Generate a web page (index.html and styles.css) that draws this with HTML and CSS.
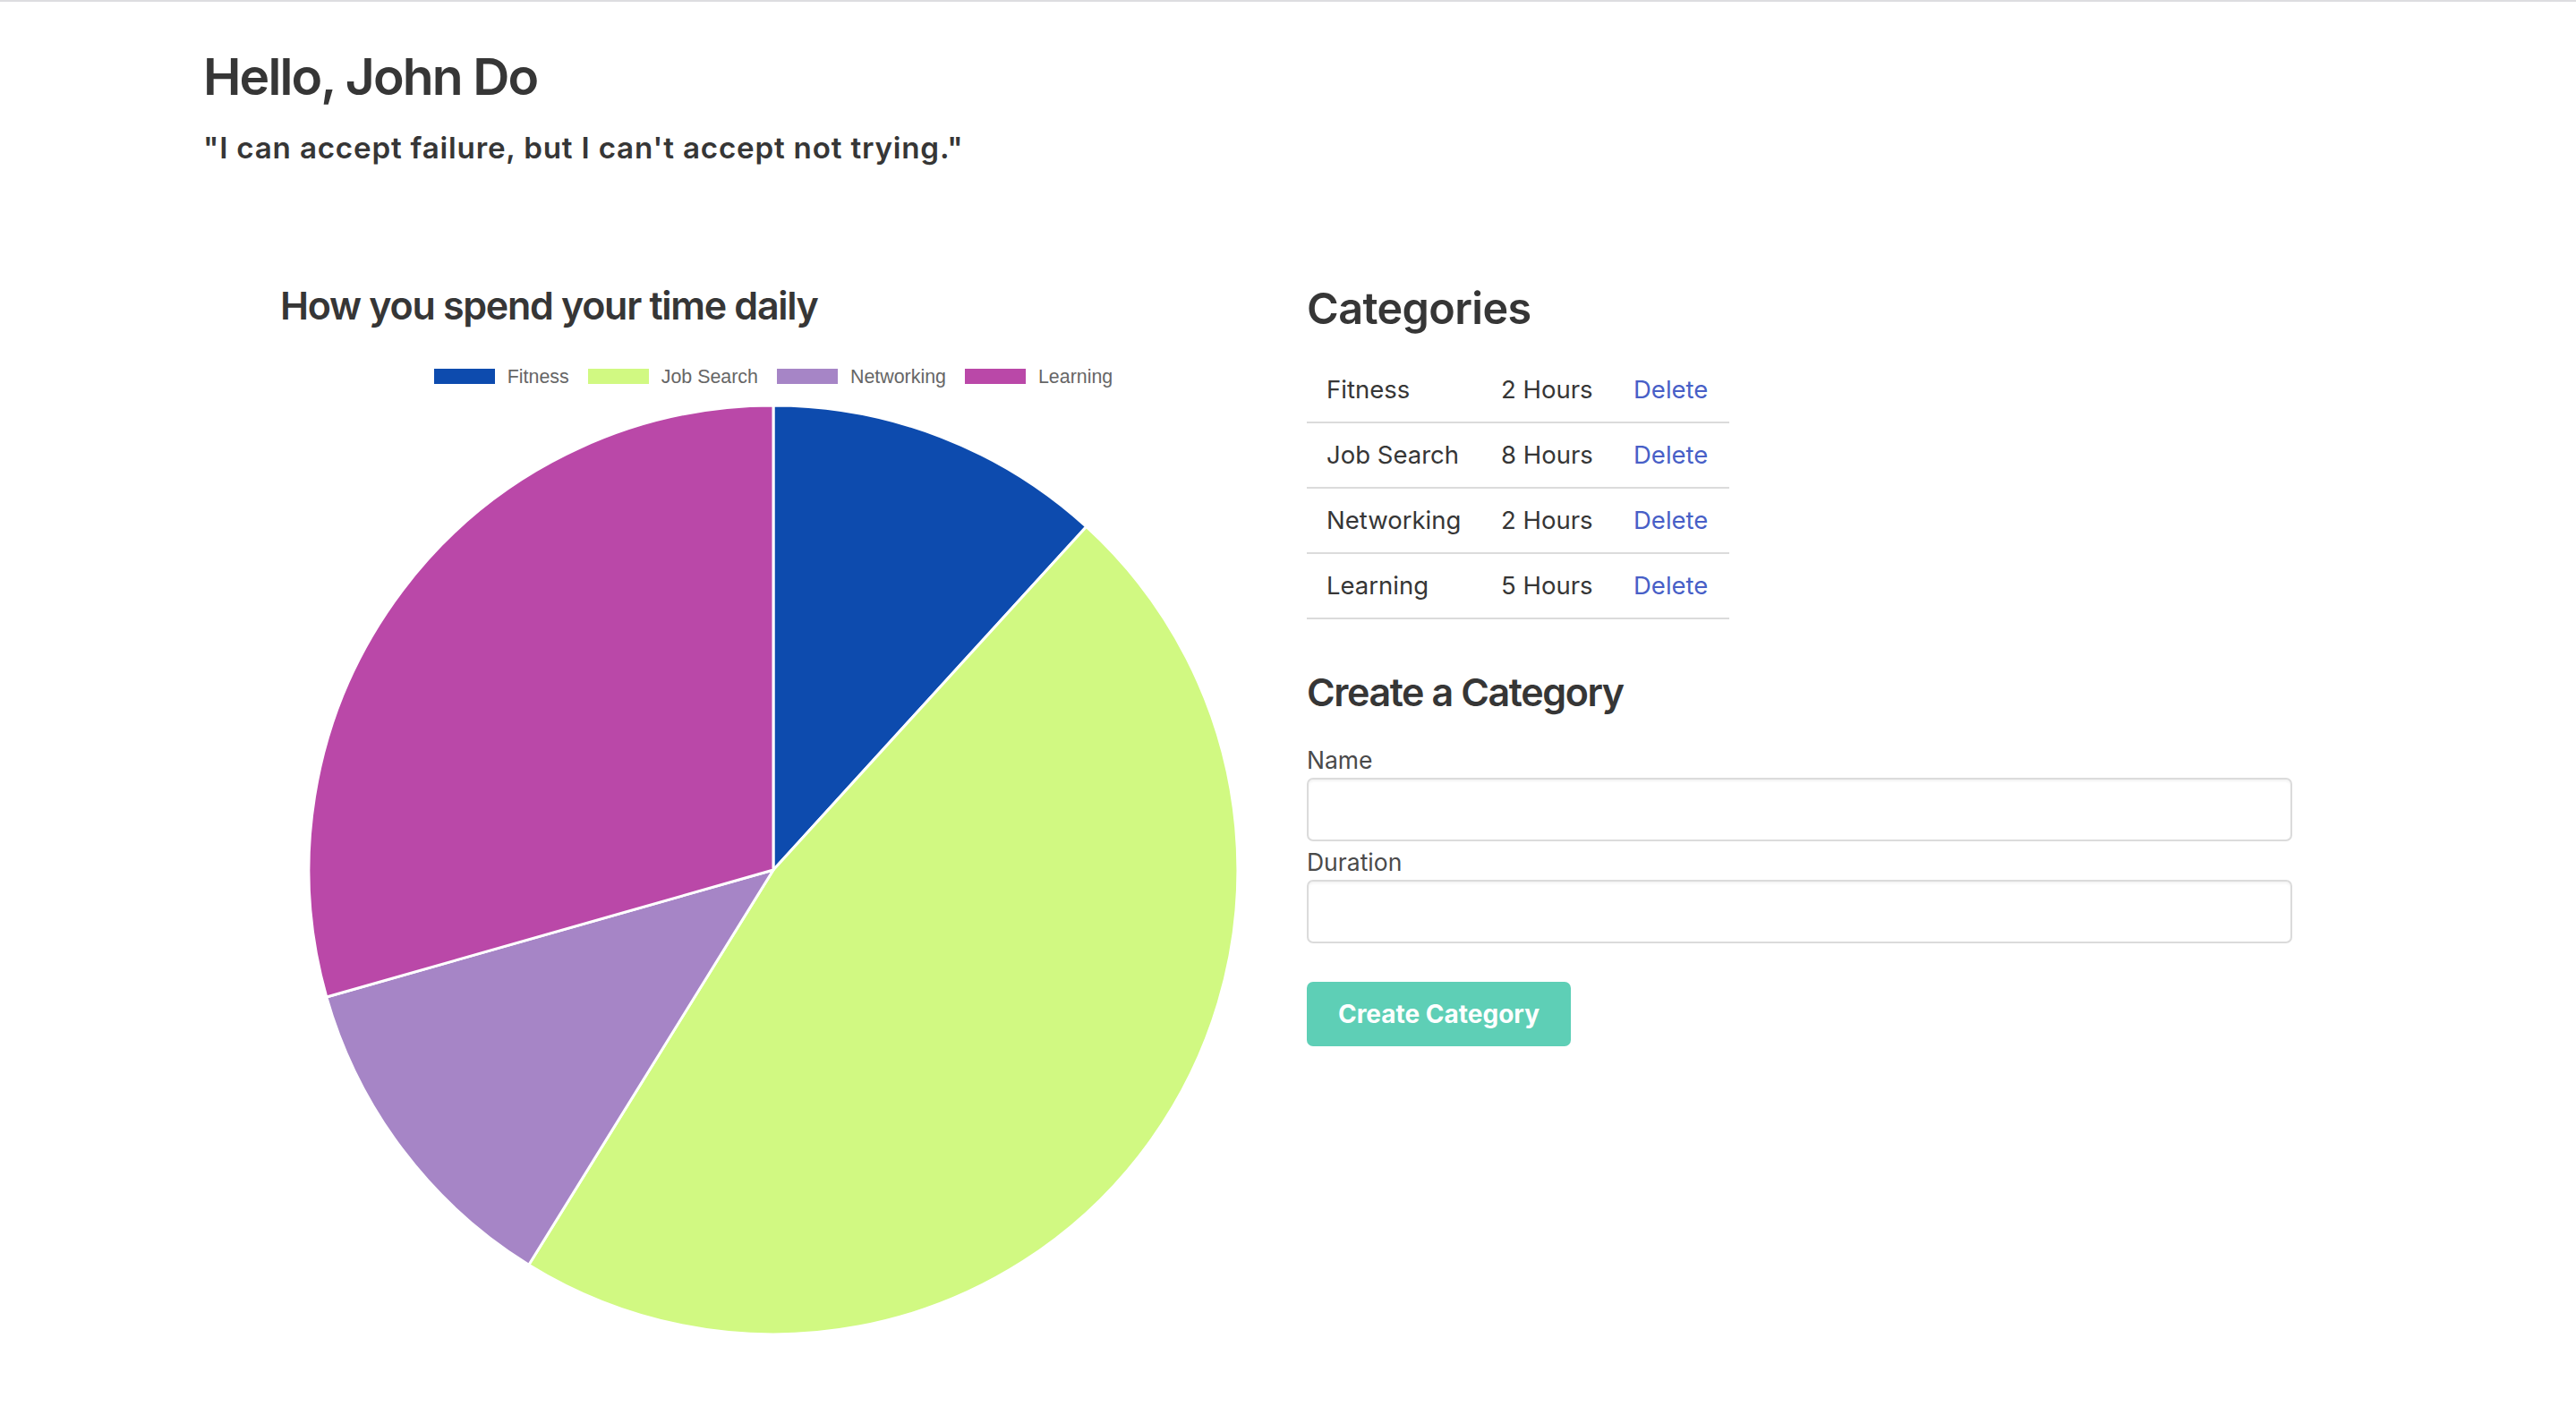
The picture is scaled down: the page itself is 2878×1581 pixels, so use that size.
FILE: index.html
```html
<!DOCTYPE html>
<html lang="en">
<head>
<meta charset="utf-8">
<title>Dashboard</title>
<link rel="stylesheet" href="styles.css">
</head>
<body>
<div class="topline"></div>
<main class="page">
  <header class="hero">
    <h1 class="hello">Hello, John Do</h1>
    <p class="quote">"I can accept failure, but I can't accept not trying."</p>
  </header>
  <section class="row">
    <div class="chart-col">
      <h2 class="chart-title">How you spend your time daily</h2>
      <ul class="legend">
        <li class="legend-item"><span class="swatch sw-fitness"></span>Fitness</li>
        <li class="legend-item"><span class="swatch sw-job"></span>Job Search</li>
        <li class="legend-item"><span class="swatch sw-net"></span>Networking</li>
        <li class="legend-item"><span class="swatch sw-learn"></span>Learning</li>
      </ul>
      <svg class="pie" width="1102" height="1070" viewBox="0 0 1102 1070" xmlns="http://www.w3.org/2000/svg">
        <g stroke="#ffffff" stroke-width="3" stroke-linejoin="round">
          <path fill="#0d4bae" d="M551 539 L551 20 A519 519 0 0 1 900.65 155.46 Z"/>
          <path fill="#d1f982" d="M551 539 L900.65 155.46 A519 519 0 0 1 277.8 980.25 Z"/>
          <path fill="#a685c6" d="M551 539 L277.8 980.25 A519 519 0 0 1 51.8 681.05 Z"/>
          <path fill="#ba48a8" d="M551 539 L51.8 681.05 A519 519 0 0 1 551 20 Z"/>
        </g>
      </svg>
    </div>
    <div class="side-col">
      <h2 class="cat-title">Categories</h2>
      <table class="cat-table">
        <colgroup>
          <col class="c-name">
          <col class="c-dur">
          <col class="c-act">
        </colgroup>
        <tbody>
          <tr><td>Fitness</td><td>2 Hours</td><td class="act"><a href="#">Delete</a></td></tr>
          <tr><td>Job Search</td><td>8 Hours</td><td class="act"><a href="#">Delete</a></td></tr>
          <tr><td>Networking</td><td>2 Hours</td><td class="act"><a href="#">Delete</a></td></tr>
          <tr><td>Learning</td><td>5 Hours</td><td class="act"><a href="#">Delete</a></td></tr>
        </tbody>
      </table>
      <h2 class="create-title">Create a Category</h2>
      <form class="create-form">
        <label class="label label-first" for="name">Name</label>
        <input class="input" id="name" type="text">
        <label class="label" for="duration">Duration</label>
        <input class="input" id="duration" type="text">
        <button class="btn" type="button">Create Category</button>
      </form>
    </div>
  </section>
</main>
</body>
</html>
```

FILE: styles.css
```css
html, body {
  margin: 0;
  padding: 0;
  background: #ffffff;
}

body {
  font-family: Inter, "Noto Sans", "Liberation Sans", sans-serif;
  color: #4a4a4a;
}

.topline {
  height: 2px;
  background: #dddde0;
}

.page {
  padding: 50px 0 0 227px;
}

.hello {
  margin: 0;
  font-size: 57px;
  line-height: 68px;
  font-weight: 600;
  letter-spacing: -1.9px;
  color: #363636;
}

.quote {
  margin: 25px 0 0;
  font-size: 33.2px;
  line-height: 40px;
  font-weight: 600;
  letter-spacing: 0.8px;
  color: #363636;
}

.row {
  display: flex;
  gap: 45px;
  margin: 129.5px 0 0 86px;
  align-items: flex-start;
}

.chart-col {
  width: 1102px;
  flex: none;
}

.chart-title {
  margin: 0;
  font-size: 43px;
  line-height: 52px;
  font-weight: 600;
  letter-spacing: -1.3px;
  color: #363636;
}

.legend {
  list-style: none;
  margin: 42px 0 0;
  padding: 0;
  display: flex;
  justify-content: center;
  gap: 21px;
  height: 24px;
  font-family: "Liberation Sans", Arial, sans-serif;
  font-size: 21.4px;
  line-height: 24px;
  color: #666666;
}

.legend-item {
  display: flex;
  align-items: center;
  gap: 14px;
}

.swatch {
  display: block;
  width: 68px;
  height: 17.5px;
}

.sw-fitness { background: #0d4bae; }
.sw-job { background: #d1f982; }
.sw-net { background: #a685c6; }
.sw-learn { background: #ba48a8; }

.pie {
  display: block;
}

.side-col {
  width: 1101px;
  flex: none;
}

.cat-title {
  margin: 1px 0 0;
  font-size: 48.5px;
  line-height: 58px;
  font-weight: 600;
  letter-spacing: -0.6px;
  color: #363636;
}

.cat-table {
  margin-top: 26.6px;
  border-collapse: separate;
  border-spacing: 0;
  table-layout: fixed;
  width: 472px;
  font-size: 27.5px;
  color: #363636;
}

.c-name { width: 195px; }
.c-dur { width: 146px; }
.c-act { width: 131px; }

.cat-table td {
  padding: 0 0 0 22px;
  height: 71px;
  line-height: 71px;
  border-bottom: 2px solid #dbdbdb;
  white-space: nowrap;
}

.cat-table td.act {
  padding-left: 24px;
}

.cat-table a {
  color: #485fc7;
  text-decoration: none;
}

.create-title {
  margin: 55.4px 0 0;
  font-size: 43px;
  line-height: 52px;
  font-weight: 600;
  letter-spacing: -1.4px;
  color: #363636;
}

.create-form {
  display: flex;
  flex-direction: column;
}

.label {
  display: block;
  margin-top: 7px;
  font-size: 26.5px;
  line-height: 32px;
  color: #4a4a4a;
}

.label-first {
  margin-top: 33.3px;
}

.input {
  box-sizing: border-box;
  margin: 4px 0 0;
  width: 100%;
  height: 71px;
  border: 2px solid #dbdbdb;
  border-radius: 7px;
  box-shadow: inset 0 2px 3px rgba(10, 10, 10, 0.05);
  background: #ffffff;
  font: inherit;
}

.btn {
  align-self: flex-start;
  margin-top: 43px;
  width: 295px;
  height: 72px;
  border: none;
  border-radius: 7px;
  background: #5ecfb6;
  color: #ffffff;
  font-family: Inter, "Noto Sans", sans-serif;
  font-size: 28px;
  font-weight: 700;
  cursor: pointer;
}
```
